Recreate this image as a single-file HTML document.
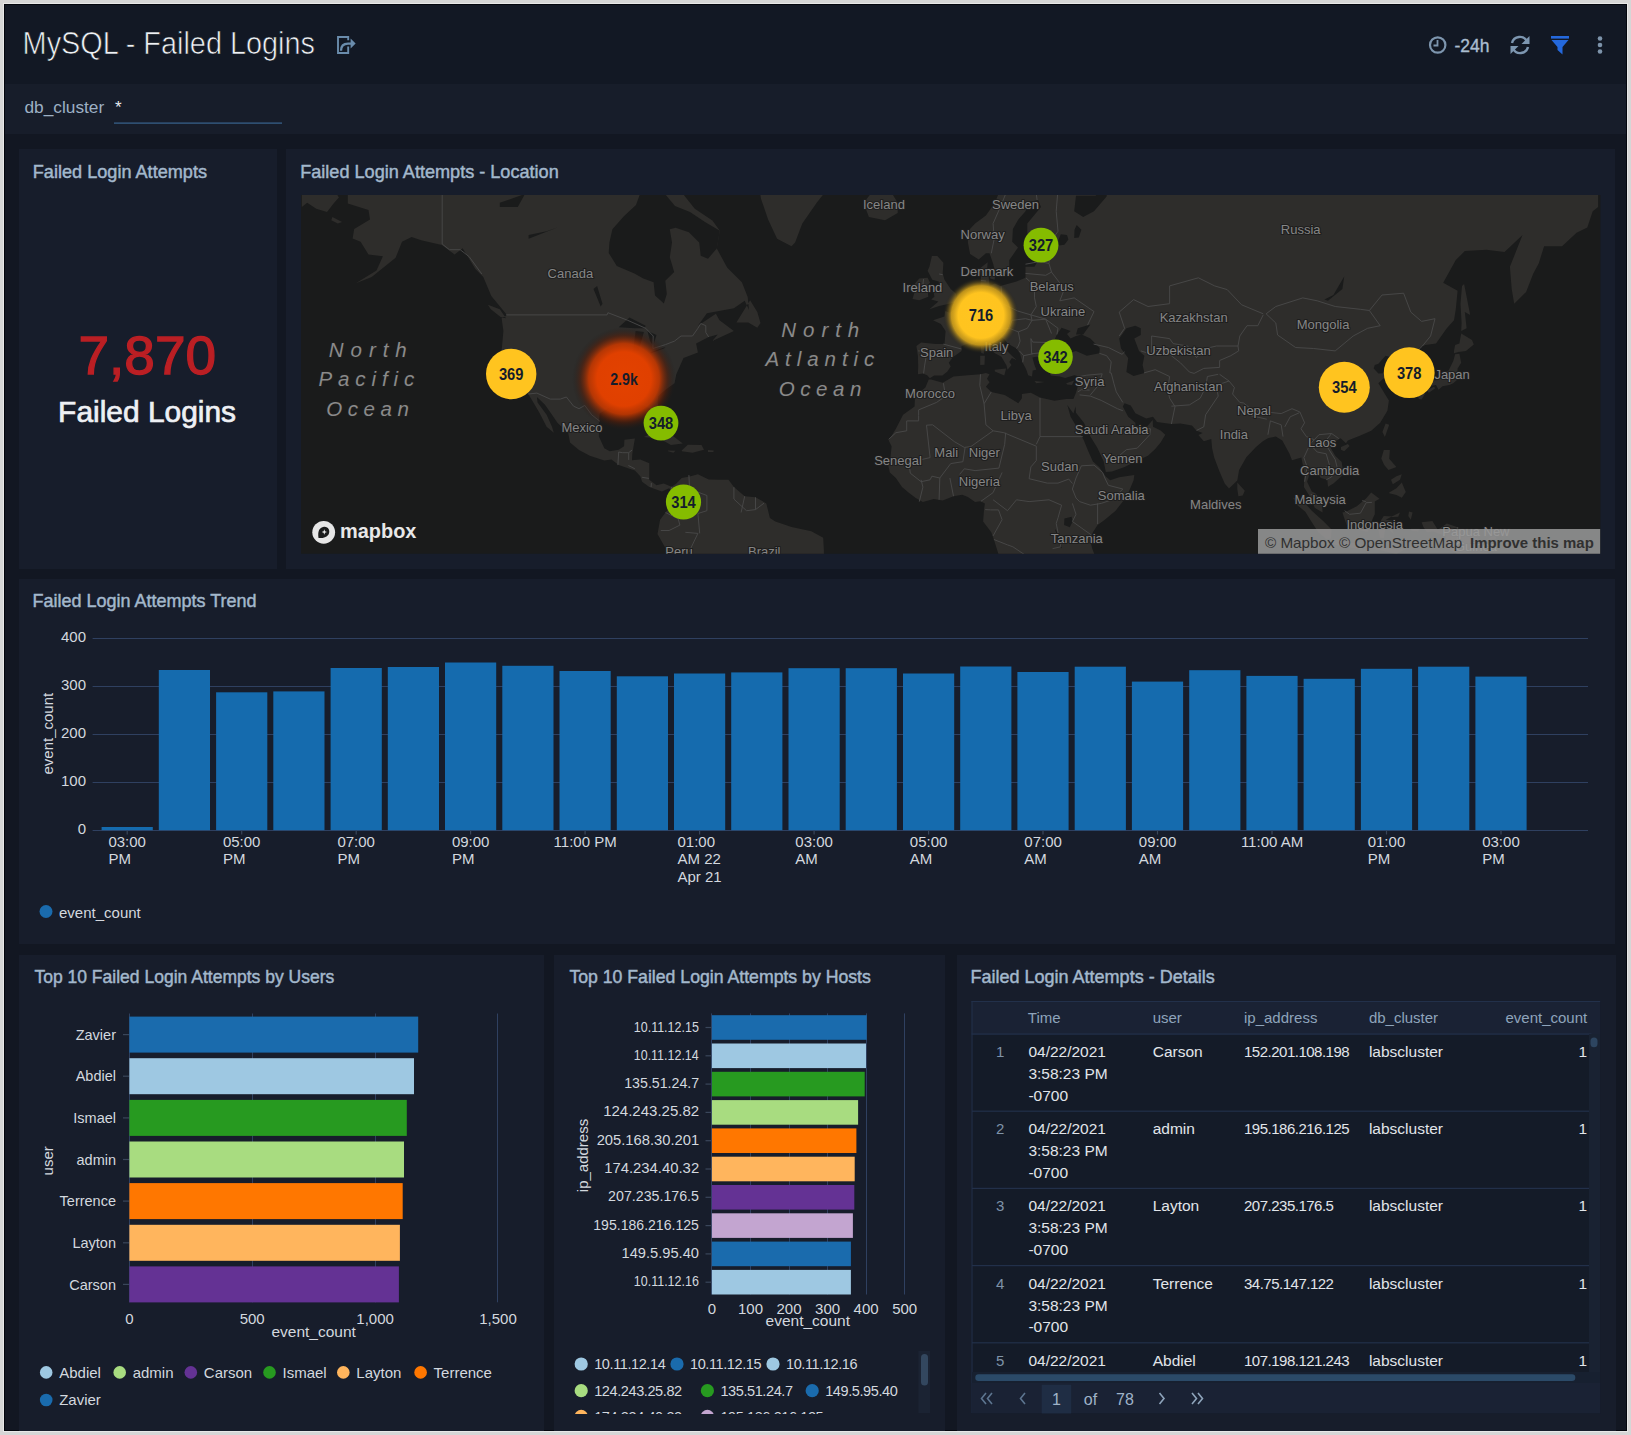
<!DOCTYPE html>
<html><head><meta charset="utf-8"><style>
html,body{margin:0;padding:0;background:#d6d6d6;width:1631px;height:1435px;overflow:hidden}
svg text{font-family:"Liberation Sans", sans-serif}
</style></head><body>
<svg width="1631" height="1435" viewBox="0 0 1631 1435" style="position:absolute;left:0;top:0">
<rect x="0" y="0" width="1631" height="1435" fill="#d6d6d6"/>
<rect x="3" y="3" width="1625" height="1429" fill="#e8e8e8"/>
<rect x="4" y="4" width="1623" height="1427" fill="#03060d"/>
<rect x="5" y="5" width="1621" height="1425" fill="#121722"/>
<rect x="5.0" y="5.0" width="1621.0" height="79.0" fill="#121824" />
<rect x="5.0" y="84.0" width="1621.0" height="50.0" fill="#171d2a" />
<text x="22.62" y="53.6" font-size="31.5" fill="#eef1f5" font-weight="400" textLength="292.36" lengthAdjust="spacingAndGlyphs" stroke="#121824" stroke-width="0.7">MySQL - Failed Logins</text>
<g fill="none" stroke="#6a8cac" stroke-width="1.9"><path d="M348.2 40.2 V37 H338 V53 H348.2 V46.6"/><path d="M341 50.8 Q341 43.6 348 43.6 H351.5" stroke-width="2.3"/></g><path d="M350.6 38.6 L355.6 43.5 L350.6 48.6 Z" fill="#6a8cac"/>
<circle cx="1437.7" cy="45" r="7.7" fill="none" stroke="#7d95ae" stroke-width="2.2"/><path d="M1437.5 40 V45.5 H1433.5" fill="none" stroke="#7d95ae" stroke-width="1.8"/>
<text x="1454.5" y="51.5" font-size="17.5" fill="#abbdd0" font-weight="400" text-anchor="start" stroke="#abbdd0" stroke-width="0.35">-24h</text>
<g fill="none" stroke="#7d96b0" stroke-width="2.4"><path d="M1512 43 A8 8 0 0 1 1527 41.5"/><path d="M1528 47 A8 8 0 0 1 1513 48.5"/></g><path d="M1529.5 36 V44 H1521.5 Z" fill="#7d96b0"/><path d="M1510.5 54 V46 H1518.5 Z" fill="#7d96b0"/>
<rect x="1551" y="36" width="18" height="2.6" fill="#2468dc"/><path d="M1551.5 40 H1568.5 L1562.5 47 V54.5 L1557.5 50 V47 Z" fill="#2468dc"/>
<circle cx="1600" cy="38.5" r="2.3" fill="#7d93aa"/>
<circle cx="1600" cy="45" r="2.3" fill="#7d93aa"/>
<circle cx="1600" cy="51.5" r="2.3" fill="#7d93aa"/>
<text x="24.5" y="113.0" font-size="17.3" fill="#9db0c4" font-weight="400" text-anchor="start" >db_cluster</text>
<text x="115.0" y="113.0" font-size="17" fill="#e6eaef" font-weight="400" text-anchor="start" >*</text>
<rect x="114.0" y="122.5" width="168.0" height="1.2" fill="#3a6590" />
<rect x="19.0" y="149.0" width="258.0" height="420.0" fill="#171d2b" />
<rect x="286.0" y="149.0" width="1329.0" height="420.0" fill="#171d2b" />
<rect x="19.0" y="579.0" width="1596.0" height="365.0" fill="#171d2b" />
<rect x="19.0" y="955.0" width="525.0" height="476.0" fill="#171d2b" />
<rect x="554.0" y="955.0" width="391.0" height="476.0" fill="#171d2b" />
<rect x="957.0" y="955.0" width="659.0" height="476.0" fill="#171d2b" />
<text x="32.81" y="177.5" font-size="17.7" fill="#a3b8cc" font-weight="400" textLength="174.22" lengthAdjust="spacingAndGlyphs" stroke="#a3b8cc" stroke-width="0.45">Failed Login Attempts</text>
<text x="300.21" y="177.5" font-size="17.7" fill="#a3b8cc" font-weight="400" textLength="258.50" lengthAdjust="spacingAndGlyphs" stroke="#a3b8cc" stroke-width="0.45">Failed Login Attempts - Location</text>
<text x="32.52" y="607.0" font-size="17.7" fill="#a3b8cc" font-weight="400" textLength="224.05" lengthAdjust="spacingAndGlyphs" stroke="#a3b8cc" stroke-width="0.45">Failed Login Attempts Trend</text>
<text x="34.41" y="983.0" font-size="17.7" fill="#a3b8cc" font-weight="400" textLength="299.92" lengthAdjust="spacingAndGlyphs" stroke="#a3b8cc" stroke-width="0.45">Top 10 Failed Login Attempts by Users</text>
<text x="569.40" y="983.0" font-size="17.7" fill="#a3b8cc" font-weight="400" textLength="301.43" lengthAdjust="spacingAndGlyphs" stroke="#a3b8cc" stroke-width="0.45">Top 10 Failed Login Attempts by Hosts</text>
<text x="970.41" y="983.0" font-size="17.7" fill="#a3b8cc" font-weight="400" textLength="244.32" lengthAdjust="spacingAndGlyphs" stroke="#a3b8cc" stroke-width="0.45">Failed Login Attempts - Details</text>
<text x="78.51" y="374.4" font-size="53.5" fill="#bb1f24" font-weight="400" textLength="137.55" lengthAdjust="spacingAndGlyphs" stroke="#bb1f24" stroke-width="1.3">7,870</text>
<text x="58.13" y="422.0" font-size="29.5" fill="#eef0f4" font-weight="400" textLength="177.94" lengthAdjust="spacingAndGlyphs" stroke="#eef0f4" stroke-width="0.7">Failed Logins</text>
<rect x="92.6" y="830.0" width="1495.4" height="1.0" fill="#2f4060" />
<text x="86.0" y="834.0" font-size="15" fill="#d3d8df" font-weight="400" text-anchor="end" >0</text>
<rect x="92.6" y="782.0" width="1495.4" height="1.0" fill="#2f4060" />
<text x="86.0" y="786.0" font-size="15" fill="#d3d8df" font-weight="400" text-anchor="end" >100</text>
<rect x="92.6" y="734.0" width="1495.4" height="1.0" fill="#2f4060" />
<text x="86.0" y="738.0" font-size="15" fill="#d3d8df" font-weight="400" text-anchor="end" >200</text>
<rect x="92.6" y="686.0" width="1495.4" height="1.0" fill="#2f4060" />
<text x="86.0" y="690.0" font-size="15" fill="#d3d8df" font-weight="400" text-anchor="end" >300</text>
<rect x="92.6" y="638.0" width="1495.4" height="1.0" fill="#2f4060" />
<text x="86.0" y="642.0" font-size="15" fill="#d3d8df" font-weight="400" text-anchor="end" >400</text>
<rect x="101.6" y="827.0" width="51.2" height="3.2" fill="#156bae" />
<rect x="158.8" y="670.0" width="51.2" height="160.2" fill="#156bae" />
<rect x="216.1" y="692.3" width="51.2" height="137.9" fill="#156bae" />
<rect x="273.3" y="691.4" width="51.2" height="138.8" fill="#156bae" />
<rect x="330.6" y="668.0" width="51.2" height="162.2" fill="#156bae" />
<rect x="387.8" y="667.0" width="51.2" height="163.2" fill="#156bae" />
<rect x="445.0" y="662.5" width="51.2" height="167.7" fill="#156bae" />
<rect x="502.3" y="665.8" width="51.2" height="164.4" fill="#156bae" />
<rect x="559.5" y="671.0" width="51.2" height="159.2" fill="#156bae" />
<rect x="616.8" y="676.3" width="51.2" height="153.9" fill="#156bae" />
<rect x="674.0" y="673.5" width="51.2" height="156.7" fill="#156bae" />
<rect x="731.2" y="672.4" width="51.2" height="157.8" fill="#156bae" />
<rect x="788.5" y="668.2" width="51.2" height="162.0" fill="#156bae" />
<rect x="845.7" y="668.2" width="51.2" height="162.0" fill="#156bae" />
<rect x="903.0" y="673.5" width="51.2" height="156.7" fill="#156bae" />
<rect x="960.2" y="666.5" width="51.2" height="163.7" fill="#156bae" />
<rect x="1017.4" y="672.0" width="51.2" height="158.2" fill="#156bae" />
<rect x="1074.7" y="666.7" width="51.2" height="163.5" fill="#156bae" />
<rect x="1131.9" y="681.6" width="51.2" height="148.6" fill="#156bae" />
<rect x="1189.2" y="670.2" width="51.2" height="160.0" fill="#156bae" />
<rect x="1246.4" y="675.9" width="51.2" height="154.3" fill="#156bae" />
<rect x="1303.6" y="678.8" width="51.2" height="151.4" fill="#156bae" />
<rect x="1360.9" y="668.8" width="51.2" height="161.4" fill="#156bae" />
<rect x="1418.1" y="666.7" width="51.2" height="163.5" fill="#156bae" />
<rect x="1475.4" y="676.6" width="51.2" height="153.6" fill="#156bae" />
<rect x="126.6" y="830.5" width="1.2" height="4.0" fill="#3a465a" />
<text x="108.4" y="846.6" font-size="15" fill="#d3d8df" font-weight="400" text-anchor="start" >03:00</text>
<text x="108.4" y="864.2" font-size="15" fill="#d3d8df" font-weight="400" text-anchor="start" >PM</text>
<rect x="241.1" y="830.5" width="1.2" height="4.0" fill="#3a465a" />
<text x="222.9" y="846.6" font-size="15" fill="#d3d8df" font-weight="400" text-anchor="start" >05:00</text>
<text x="222.9" y="864.2" font-size="15" fill="#d3d8df" font-weight="400" text-anchor="start" >PM</text>
<rect x="355.6" y="830.5" width="1.2" height="4.0" fill="#3a465a" />
<text x="337.4" y="846.6" font-size="15" fill="#d3d8df" font-weight="400" text-anchor="start" >07:00</text>
<text x="337.4" y="864.2" font-size="15" fill="#d3d8df" font-weight="400" text-anchor="start" >PM</text>
<rect x="470.0" y="830.5" width="1.2" height="4.0" fill="#3a465a" />
<text x="451.9" y="846.6" font-size="15" fill="#d3d8df" font-weight="400" text-anchor="start" >09:00</text>
<text x="451.9" y="864.2" font-size="15" fill="#d3d8df" font-weight="400" text-anchor="start" >PM</text>
<rect x="584.5" y="830.5" width="1.2" height="4.0" fill="#3a465a" />
<text x="553.6" y="846.6" font-size="15" fill="#d3d8df" font-weight="400" text-anchor="start" >11:00 PM</text>
<rect x="699.0" y="830.5" width="1.2" height="4.0" fill="#3a465a" />
<text x="677.5" y="846.6" font-size="15" fill="#d3d8df" font-weight="400" text-anchor="start" >01:00</text>
<text x="677.5" y="864.2" font-size="15" fill="#d3d8df" font-weight="400" text-anchor="start" >AM 22</text>
<text x="677.5" y="881.8" font-size="15" fill="#d3d8df" font-weight="400" text-anchor="start" >Apr 21</text>
<rect x="813.5" y="830.5" width="1.2" height="4.0" fill="#3a465a" />
<text x="795.3" y="846.6" font-size="15" fill="#d3d8df" font-weight="400" text-anchor="start" >03:00</text>
<text x="795.3" y="864.2" font-size="15" fill="#d3d8df" font-weight="400" text-anchor="start" >AM</text>
<rect x="928.0" y="830.5" width="1.2" height="4.0" fill="#3a465a" />
<text x="909.8" y="846.6" font-size="15" fill="#d3d8df" font-weight="400" text-anchor="start" >05:00</text>
<text x="909.8" y="864.2" font-size="15" fill="#d3d8df" font-weight="400" text-anchor="start" >AM</text>
<rect x="1042.4" y="830.5" width="1.2" height="4.0" fill="#3a465a" />
<text x="1024.3" y="846.6" font-size="15" fill="#d3d8df" font-weight="400" text-anchor="start" >07:00</text>
<text x="1024.3" y="864.2" font-size="15" fill="#d3d8df" font-weight="400" text-anchor="start" >AM</text>
<rect x="1156.9" y="830.5" width="1.2" height="4.0" fill="#3a465a" />
<text x="1138.8" y="846.6" font-size="15" fill="#d3d8df" font-weight="400" text-anchor="start" >09:00</text>
<text x="1138.8" y="864.2" font-size="15" fill="#d3d8df" font-weight="400" text-anchor="start" >AM</text>
<rect x="1271.4" y="830.5" width="1.2" height="4.0" fill="#3a465a" />
<text x="1240.9" y="846.6" font-size="15" fill="#d3d8df" font-weight="400" text-anchor="start" >11:00 AM</text>
<rect x="1385.9" y="830.5" width="1.2" height="4.0" fill="#3a465a" />
<text x="1367.7" y="846.6" font-size="15" fill="#d3d8df" font-weight="400" text-anchor="start" >01:00</text>
<text x="1367.7" y="864.2" font-size="15" fill="#d3d8df" font-weight="400" text-anchor="start" >PM</text>
<rect x="1500.4" y="830.5" width="1.2" height="4.0" fill="#3a465a" />
<text x="1482.2" y="846.6" font-size="15" fill="#d3d8df" font-weight="400" text-anchor="start" >03:00</text>
<text x="1482.2" y="864.2" font-size="15" fill="#d3d8df" font-weight="400" text-anchor="start" >PM</text>
<text x="0.0" y="0.0" font-size="15" fill="#d3d8df" font-weight="400" text-anchor="middle" transform="translate(52.5 733.7) rotate(-90)">event_count</text>
<circle cx="46" cy="911.5" r="6.5" fill="#1a6bad"/>
<text x="59.0" y="918.0" font-size="15" fill="#d3d8df" font-weight="400" text-anchor="start" >event_count</text>
<rect x="129.0" y="1013.5" width="1.0" height="288.8" fill="#2f4060" />
<rect x="252.0" y="1013.5" width="1.0" height="288.8" fill="#2f4060" />
<rect x="375.0" y="1013.5" width="1.0" height="288.8" fill="#2f4060" />
<rect x="497.0" y="1013.5" width="1.0" height="288.8" fill="#2f4060" />
<rect x="129.4" y="1016.6" width="288.8" height="36.0" fill="#1a6bad" />
<rect x="123.0" y="1034.0" width="6.0" height="1.2" fill="#3a465a" />
<text x="116.0" y="1039.8" font-size="14.5" fill="#d3d8df" font-weight="400" text-anchor="end" >Zavier</text>
<rect x="129.4" y="1058.2" width="284.6" height="36.0" fill="#9ec8e2" />
<rect x="123.0" y="1075.6" width="6.0" height="1.2" fill="#3a465a" />
<text x="116.0" y="1081.4" font-size="14.5" fill="#d3d8df" font-weight="400" text-anchor="end" >Abdiel</text>
<rect x="129.4" y="1099.9" width="277.4" height="36.0" fill="#279a20" />
<rect x="123.0" y="1117.3" width="6.0" height="1.2" fill="#3a465a" />
<text x="116.0" y="1123.1" font-size="14.5" fill="#d3d8df" font-weight="400" text-anchor="end" >Ismael</text>
<rect x="129.4" y="1141.5" width="274.6" height="36.0" fill="#a8dc80" />
<rect x="123.0" y="1158.9" width="6.0" height="1.2" fill="#3a465a" />
<text x="116.0" y="1164.7" font-size="14.5" fill="#d3d8df" font-weight="400" text-anchor="end" >admin</text>
<rect x="129.4" y="1183.1" width="273.3" height="36.0" fill="#ff7700" />
<rect x="123.0" y="1200.5" width="6.0" height="1.2" fill="#3a465a" />
<text x="116.0" y="1206.3" font-size="14.5" fill="#d3d8df" font-weight="400" text-anchor="end" >Terrence</text>
<rect x="129.4" y="1224.8" width="270.5" height="36.0" fill="#ffb55d" />
<rect x="123.0" y="1242.2" width="6.0" height="1.2" fill="#3a465a" />
<text x="116.0" y="1248.0" font-size="14.5" fill="#d3d8df" font-weight="400" text-anchor="end" >Layton</text>
<rect x="129.4" y="1266.4" width="269.5" height="36.0" fill="#643294" />
<rect x="123.0" y="1283.8" width="6.0" height="1.2" fill="#3a465a" />
<text x="116.0" y="1289.6" font-size="14.5" fill="#d3d8df" font-weight="400" text-anchor="end" >Carson</text>
<text x="129.4" y="1323.5" font-size="15" fill="#d3d8df" font-weight="400" text-anchor="middle" >0</text>
<text x="252.2" y="1323.5" font-size="15" fill="#d3d8df" font-weight="400" text-anchor="middle" >500</text>
<text x="375.1" y="1323.5" font-size="15" fill="#d3d8df" font-weight="400" text-anchor="middle" >1,000</text>
<text x="498.0" y="1323.5" font-size="15" fill="#d3d8df" font-weight="400" text-anchor="middle" >1,500</text>
<text x="313.7" y="1336.8" font-size="15.5" fill="#d3d8df" font-weight="400" text-anchor="middle" >event_count</text>
<text x="0.0" y="0.0" font-size="15" fill="#d3d8df" font-weight="400" text-anchor="middle" transform="translate(52.5 1160.8) rotate(-90)">user</text>
<circle cx="46.2" cy="1372.4" r="6.3" fill="#9ec8e2"/>
<text x="59.2" y="1377.7" font-size="15" fill="#d3d8df" font-weight="400" text-anchor="start" >Abdiel</text>
<circle cx="119.7" cy="1372.4" r="6.3" fill="#a8dc80"/>
<text x="132.7" y="1377.7" font-size="15" fill="#d3d8df" font-weight="400" text-anchor="start" >admin</text>
<circle cx="190.8" cy="1372.4" r="6.3" fill="#643294"/>
<text x="203.8" y="1377.7" font-size="15" fill="#d3d8df" font-weight="400" text-anchor="start" >Carson</text>
<circle cx="269.5" cy="1372.4" r="6.3" fill="#279a20"/>
<text x="282.5" y="1377.7" font-size="15" fill="#d3d8df" font-weight="400" text-anchor="start" >Ismael</text>
<circle cx="343.3" cy="1372.4" r="6.3" fill="#ffb55d"/>
<text x="356.3" y="1377.7" font-size="15" fill="#d3d8df" font-weight="400" text-anchor="start" >Layton</text>
<circle cx="420.6" cy="1372.4" r="6.3" fill="#ff7700"/>
<text x="433.6" y="1377.7" font-size="15" fill="#d3d8df" font-weight="400" text-anchor="start" >Terrence</text>
<circle cx="46.2" cy="1400" r="6.3" fill="#1a6bad"/>
<text x="59.2" y="1405.3" font-size="15" fill="#d3d8df" font-weight="400" text-anchor="start" >Zavier</text>
<rect x="711.0" y="1013.4" width="1.0" height="281.1" fill="#2f4060" />
<rect x="750.0" y="1013.4" width="1.0" height="281.1" fill="#2f4060" />
<rect x="789.0" y="1013.4" width="1.0" height="281.1" fill="#2f4060" />
<rect x="827.0" y="1013.4" width="1.0" height="281.1" fill="#2f4060" />
<rect x="866.0" y="1013.4" width="1.0" height="281.1" fill="#2f4060" />
<rect x="904.0" y="1013.4" width="1.0" height="281.1" fill="#2f4060" />
<rect x="711.9" y="1015.2" width="154.8" height="24.6" fill="#1a6bad" />
<rect x="705.5" y="1026.9" width="6.0" height="1.2" fill="#3a465a" />
<text x="633.76" y="1031.5" font-size="15" fill="#d3d8df" font-weight="400" textLength="65.15" lengthAdjust="spacingAndGlyphs" >10.11.12.15</text>
<rect x="711.9" y="1043.5" width="154.1" height="24.6" fill="#9ec8e2" />
<rect x="705.5" y="1055.2" width="6.0" height="1.2" fill="#3a465a" />
<text x="633.76" y="1059.8" font-size="15" fill="#d3d8df" font-weight="400" textLength="64.99" lengthAdjust="spacingAndGlyphs" >10.11.12.14</text>
<rect x="711.9" y="1071.8" width="152.8" height="24.6" fill="#279a20" />
<rect x="705.5" y="1083.5" width="6.0" height="1.2" fill="#3a465a" />
<text x="624.24" y="1088.1" font-size="15" fill="#d3d8df" font-weight="400" textLength="74.88" lengthAdjust="spacingAndGlyphs" >135.51.24.7</text>
<rect x="711.9" y="1100.1" width="146.2" height="24.6" fill="#a8dc80" />
<rect x="705.5" y="1111.8" width="6.0" height="1.2" fill="#3a465a" />
<text x="603.17" y="1116.4" font-size="15" fill="#d3d8df" font-weight="400" textLength="95.98" lengthAdjust="spacingAndGlyphs" >124.243.25.82</text>
<rect x="711.9" y="1128.4" width="144.5" height="24.6" fill="#ff7700" />
<rect x="705.5" y="1140.1" width="6.0" height="1.2" fill="#3a465a" />
<text x="596.66" y="1144.7" font-size="15" fill="#d3d8df" font-weight="400" textLength="102.46" lengthAdjust="spacingAndGlyphs" >205.168.30.201</text>
<rect x="711.9" y="1156.7" width="142.8" height="24.6" fill="#ffb55d" />
<rect x="705.5" y="1168.4" width="6.0" height="1.2" fill="#3a465a" />
<text x="604.19" y="1173.0" font-size="15" fill="#d3d8df" font-weight="400" textLength="94.96" lengthAdjust="spacingAndGlyphs" >174.234.40.32</text>
<rect x="711.9" y="1185.0" width="142.4" height="24.6" fill="#643294" />
<rect x="705.5" y="1196.7" width="6.0" height="1.2" fill="#3a465a" />
<text x="608.09" y="1201.3" font-size="15" fill="#d3d8df" font-weight="400" textLength="90.88" lengthAdjust="spacingAndGlyphs" >207.235.176.5</text>
<rect x="711.9" y="1213.3" width="141.0" height="24.6" fill="#c3a5d0" />
<rect x="705.5" y="1225.0" width="6.0" height="1.2" fill="#3a465a" />
<text x="593.24" y="1229.6" font-size="15" fill="#d3d8df" font-weight="400" textLength="105.72" lengthAdjust="spacingAndGlyphs" >195.186.216.125</text>
<rect x="711.9" y="1241.6" width="139.0" height="24.6" fill="#1a6bad" />
<rect x="705.5" y="1253.3" width="6.0" height="1.2" fill="#3a465a" />
<text x="621.50" y="1257.9" font-size="15" fill="#d3d8df" font-weight="400" textLength="77.46" lengthAdjust="spacingAndGlyphs" >149.5.95.40</text>
<rect x="711.9" y="1269.9" width="139.0" height="24.6" fill="#9ec8e2" />
<rect x="705.5" y="1281.6" width="6.0" height="1.2" fill="#3a465a" />
<text x="633.76" y="1286.2" font-size="15" fill="#d3d8df" font-weight="400" textLength="65.19" lengthAdjust="spacingAndGlyphs" >10.11.12.16</text>
<text x="711.9" y="1314.0" font-size="15" fill="#d3d8df" font-weight="400" text-anchor="middle" >0</text>
<text x="750.5" y="1314.0" font-size="15" fill="#d3d8df" font-weight="400" text-anchor="middle" >100</text>
<text x="789.0" y="1314.0" font-size="15" fill="#d3d8df" font-weight="400" text-anchor="middle" >200</text>
<text x="827.6" y="1314.0" font-size="15" fill="#d3d8df" font-weight="400" text-anchor="middle" >300</text>
<text x="866.1" y="1314.0" font-size="15" fill="#d3d8df" font-weight="400" text-anchor="middle" >400</text>
<text x="904.7" y="1314.0" font-size="15" fill="#d3d8df" font-weight="400" text-anchor="middle" >500</text>
<text x="807.8" y="1325.5" font-size="15.5" fill="#d3d8df" font-weight="400" text-anchor="middle" >event_count</text>
<text x="0.0" y="0.0" font-size="15" fill="#d3d8df" font-weight="400" text-anchor="middle" transform="translate(587.5 1155.5) rotate(-90)">ip_address</text>
<svg x="560" y="1350" width="360" height="64" overflow="hidden">
<circle cx="21.200000000000045" cy="14" r="6.6" fill="#9ec8e2"/>
<text x="34.2" y="19.2" font-size="14.5" fill="#d3d8df" font-weight="400" text-anchor="start" letter-spacing="-0.4">10.11.12.14</text>
<circle cx="117" cy="14" r="6.6" fill="#1a6bad"/>
<text x="130.0" y="19.2" font-size="14.5" fill="#d3d8df" font-weight="400" text-anchor="start" letter-spacing="-0.4">10.11.12.15</text>
<circle cx="213" cy="14" r="6.6" fill="#9ec8e2"/>
<text x="226.0" y="19.2" font-size="14.5" fill="#d3d8df" font-weight="400" text-anchor="start" letter-spacing="-0.4">10.11.12.16</text>
<circle cx="21.200000000000045" cy="40.700000000000045" r="6.6" fill="#a8dc80"/>
<text x="34.2" y="45.9" font-size="14.5" fill="#d3d8df" font-weight="400" text-anchor="start" letter-spacing="-0.4">124.243.25.82</text>
<circle cx="147.39999999999998" cy="40.700000000000045" r="6.6" fill="#279a20"/>
<text x="160.4" y="45.9" font-size="14.5" fill="#d3d8df" font-weight="400" text-anchor="start" letter-spacing="-0.4">135.51.24.7</text>
<circle cx="252.20000000000005" cy="40.700000000000045" r="6.6" fill="#1a6bad"/>
<text x="265.2" y="45.9" font-size="14.5" fill="#d3d8df" font-weight="400" text-anchor="start" letter-spacing="-0.4">149.5.95.40</text>
<circle cx="21.200000000000045" cy="66.29999999999995" r="6.6" fill="#ffb55d"/>
<text x="34.2" y="71.5" font-size="14.5" fill="#d3d8df" font-weight="400" text-anchor="start" letter-spacing="-0.4">174.234.40.32</text>
<circle cx="147.39999999999998" cy="66.29999999999995" r="6.6" fill="#c3a5d0"/>
<text x="160.4" y="71.5" font-size="14.5" fill="#d3d8df" font-weight="400" text-anchor="start" letter-spacing="-0.4">195.186.216.125</text>
</svg>
<rect x="918.4" y="1351.0" width="11.6" height="62.0" fill="#1b2333" />
<rect x="921" y="1354" width="7" height="31.5" rx="3.5" fill="#33475f"/>
<rect x="971.5" y="1001.0" width="628.7" height="412.4" fill="#141b28" />
<rect x="971.5" y="1001.0" width="628.7" height="33.0" fill="#1a2234" />
<rect x="971.5" y="1001.0" width="628.7" height="1.0" fill="#22304a" />
<rect x="971.5" y="1001.0" width="1.0" height="412.0" fill="#22304a" />
<rect x="971.5" y="1033.5" width="620.0" height="1.2" fill="#22304a" />
<rect x="1589.0" y="1034.0" width="11.0" height="349.0" fill="#192232" />
<rect x="1590.5" y="1037.6" width="7" height="9.6" rx="3.5" fill="#2d4560"/>
<text x="1027.8" y="1022.8" font-size="15" fill="#8ea4bb" font-weight="400" text-anchor="start" >Time</text>
<text x="1152.7" y="1022.8" font-size="15" fill="#8ea4bb" font-weight="400" text-anchor="start" >user</text>
<text x="1244.0" y="1022.8" font-size="15" fill="#8ea4bb" font-weight="400" text-anchor="start" >ip_address</text>
<text x="1368.9" y="1022.8" font-size="15" fill="#8ea4bb" font-weight="400" text-anchor="start" >db_cluster</text>
<text x="1587.2" y="1022.8" font-size="15" fill="#8ea4bb" font-weight="400" text-anchor="end" >event_count</text>
<svg x="972" y="1034" width="617" height="338" overflow="hidden">
<text x="28.2" y="23.0" font-size="15" fill="#7f93a8" font-weight="400" text-anchor="middle" >1</text>
<text x="56.4" y="23.0" font-size="15.5" fill="#e1e5ea" font-weight="400" text-anchor="start" >04/22/2021</text>
<text x="56.4" y="44.9" font-size="15.5" fill="#e1e5ea" font-weight="400" text-anchor="start" >3:58:23 PM</text>
<text x="56.4" y="66.8" font-size="15.5" fill="#e1e5ea" font-weight="400" text-anchor="start" >-0700</text>
<text x="180.7" y="23.0" font-size="15.5" fill="#e1e5ea" font-weight="400" text-anchor="start" >Carson</text>
<text x="272.0" y="23.0" font-size="15" fill="#e1e5ea" font-weight="400" text-anchor="start" letter-spacing="-0.5">152.201.108.198</text>
<text x="396.9" y="23.0" font-size="15.5" fill="#e1e5ea" font-weight="400" text-anchor="start" >labscluster</text>
<text x="615.2" y="23.0" font-size="15.5" fill="#e1e5ea" font-weight="400" text-anchor="end" >1</text>
<rect x="0.0" y="76.6" width="617.0" height="1.2" fill="#22304a" />
<text x="28.2" y="100.2" font-size="15" fill="#7f93a8" font-weight="400" text-anchor="middle" >2</text>
<text x="56.4" y="100.2" font-size="15.5" fill="#e1e5ea" font-weight="400" text-anchor="start" >04/22/2021</text>
<text x="56.4" y="122.1" font-size="15.5" fill="#e1e5ea" font-weight="400" text-anchor="start" >3:58:23 PM</text>
<text x="56.4" y="144.0" font-size="15.5" fill="#e1e5ea" font-weight="400" text-anchor="start" >-0700</text>
<text x="180.7" y="100.2" font-size="15.5" fill="#e1e5ea" font-weight="400" text-anchor="start" >admin</text>
<text x="272.0" y="100.2" font-size="15" fill="#e1e5ea" font-weight="400" text-anchor="start" letter-spacing="-0.5">195.186.216.125</text>
<text x="396.9" y="100.2" font-size="15.5" fill="#e1e5ea" font-weight="400" text-anchor="start" >labscluster</text>
<text x="615.2" y="100.2" font-size="15.5" fill="#e1e5ea" font-weight="400" text-anchor="end" >1</text>
<rect x="0.0" y="153.8" width="617.0" height="1.2" fill="#22304a" />
<text x="28.2" y="177.4" font-size="15" fill="#7f93a8" font-weight="400" text-anchor="middle" >3</text>
<text x="56.4" y="177.4" font-size="15.5" fill="#e1e5ea" font-weight="400" text-anchor="start" >04/22/2021</text>
<text x="56.4" y="199.3" font-size="15.5" fill="#e1e5ea" font-weight="400" text-anchor="start" >3:58:23 PM</text>
<text x="56.4" y="221.2" font-size="15.5" fill="#e1e5ea" font-weight="400" text-anchor="start" >-0700</text>
<text x="180.7" y="177.4" font-size="15.5" fill="#e1e5ea" font-weight="400" text-anchor="start" >Layton</text>
<text x="272.0" y="177.4" font-size="15" fill="#e1e5ea" font-weight="400" text-anchor="start" letter-spacing="-0.5">207.235.176.5</text>
<text x="396.9" y="177.4" font-size="15.5" fill="#e1e5ea" font-weight="400" text-anchor="start" >labscluster</text>
<text x="615.2" y="177.4" font-size="15.5" fill="#e1e5ea" font-weight="400" text-anchor="end" >1</text>
<rect x="0.0" y="231.0" width="617.0" height="1.2" fill="#22304a" />
<text x="28.2" y="254.6" font-size="15" fill="#7f93a8" font-weight="400" text-anchor="middle" >4</text>
<text x="56.4" y="254.6" font-size="15.5" fill="#e1e5ea" font-weight="400" text-anchor="start" >04/22/2021</text>
<text x="56.4" y="276.5" font-size="15.5" fill="#e1e5ea" font-weight="400" text-anchor="start" >3:58:23 PM</text>
<text x="56.4" y="298.4" font-size="15.5" fill="#e1e5ea" font-weight="400" text-anchor="start" >-0700</text>
<text x="180.7" y="254.6" font-size="15.5" fill="#e1e5ea" font-weight="400" text-anchor="start" >Terrence</text>
<text x="272.0" y="254.6" font-size="15" fill="#e1e5ea" font-weight="400" text-anchor="start" letter-spacing="-0.5">34.75.147.122</text>
<text x="396.9" y="254.6" font-size="15.5" fill="#e1e5ea" font-weight="400" text-anchor="start" >labscluster</text>
<text x="615.2" y="254.6" font-size="15.5" fill="#e1e5ea" font-weight="400" text-anchor="end" >1</text>
<rect x="0.0" y="308.2" width="617.0" height="1.2" fill="#22304a" />
<text x="28.2" y="331.8" font-size="15" fill="#7f93a8" font-weight="400" text-anchor="middle" >5</text>
<text x="56.4" y="331.8" font-size="15.5" fill="#e1e5ea" font-weight="400" text-anchor="start" >04/22/2021</text>
<text x="56.4" y="353.7" font-size="15.5" fill="#e1e5ea" font-weight="400" text-anchor="start" >3:58:23 PM</text>
<text x="56.4" y="375.6" font-size="15.5" fill="#e1e5ea" font-weight="400" text-anchor="start" >-0700</text>
<text x="180.7" y="331.8" font-size="15.5" fill="#e1e5ea" font-weight="400" text-anchor="start" >Abdiel</text>
<text x="272.0" y="331.8" font-size="15" fill="#e1e5ea" font-weight="400" text-anchor="start" letter-spacing="-0.5">107.198.121.243</text>
<text x="396.9" y="331.8" font-size="15.5" fill="#e1e5ea" font-weight="400" text-anchor="start" >labscluster</text>
<text x="615.2" y="331.8" font-size="15.5" fill="#e1e5ea" font-weight="400" text-anchor="end" >1</text>
</svg>
<rect x="972.0" y="1372.0" width="628.0" height="11.0" fill="#172030" />
<rect x="975.3" y="1374.3" width="600" height="6.7" rx="3.3" fill="#2b4a68"/>
<rect x="971.5" y="1383.0" width="628.7" height="30.4" fill="#1a2234" />
<rect x="1041.7" y="1384.8" width="29.5" height="28.6" fill="#1f2d44" />
<text x="1056.5" y="1405.0" font-size="16" fill="#9fb3c8" font-weight="400" text-anchor="middle" >1</text>
<text x="1083.8" y="1405.0" font-size="16" fill="#9fb3c8" font-weight="400" text-anchor="start" >of</text>
<text x="1116.0" y="1405.0" font-size="16" fill="#9fb3c8" font-weight="400" text-anchor="start" >78</text>
<g fill="none" stroke="#5d7590" stroke-width="1.6"><path d="M986 1393 L981.5 1398.5 L986 1404 M992 1393 L987.5 1398.5 L992 1404"/><path d="M1025 1393 L1020.5 1398.5 L1025 1404"/></g><g fill="none" stroke="#8ea4bb" stroke-width="1.6"><path d="M1159.5 1393 L1164 1398.5 L1159.5 1404"/><path d="M1192 1393 L1196.5 1398.5 L1192 1404 M1198 1393 L1202.5 1398.5 L1198 1404"/></g>
<svg x="301" y="195" width="1299.4" height="358.7" viewBox="301 195 1299.4 358.7" overflow="hidden">
<rect x="301" y="195" width="1300" height="360" fill="#1a1b1b"/>
<path fill="#2e2d2b" d="M345.0 137.7L347.8 190.0L347.8 203.6L368.5 210.0L370.0 219.5L354.2 229.0L352.6 238.6L360.6 241.8L368.5 254.6L382.9 256.2L376.5 270.5L355.8 283.3L371.7 276.9L395.6 257.8L402.0 241.8L411.6 237.0L421.2 240.2L441.9 245.0L454.6 254.6L462.6 248.2L475.4 268.9L483.3 276.9L491.3 296.0L507.2 315.2L501.6 318.2L503.4 330.9L501.6 350.9L504.2 362.8L509.2 372.0L515.7 385.4L527.9 393.6L532.2 400.4L539.4 412.8L546.6 426.8L553.8 432.7L552.0 426.8L546.6 414.8L537.6 402.4L536.9 397.0L544.8 404.5L552.0 414.8L557.4 422.8L568.2 432.7L570.0 442.4L579.0 450.1L589.8 455.7L604.3 460.6L611.5 459.5L618.7 465.1L629.5 468.8L634.9 470.6L640.3 476.2L642.1 481.7L649.3 487.1L661.9 491.5L669.1 488.2L671.6 490.8L670.9 494.4L671.6 505.2L665.5 512.5L660.1 519.7L657.5 534.1L663.7 544.9L669.1 554.1L672.7 561.4L823.9 561.4L823.9 550.4L823.2 537.7L811.3 531.2L791.5 526.9L775.3 521.5L769.9 517.9L766.3 503.4L755.5 497.3L744.7 496.2L733.9 487.1L728.5 479.8L719.5 479.8L708.7 479.5L697.9 474.3L690.7 476.2L681.7 478.0L676.3 483.5L671.6 486.8L663.7 483.5L656.5 485.3L649.3 479.8L649.3 463.2L640.3 459.5L632.0 460.2L632.3 453.8L634.9 438.6L624.4 439.7L624.1 446.2L618.7 449.7L609.7 451.2L604.3 448.2L598.9 436.6L598.9 422.8L599.6 413.6L611.5 406.2L625.9 407.8L629.5 403.3L643.9 405.8L651.1 408.7L652.5 416.8L657.5 424.0L661.9 418.8L657.5 402.4L658.3 396.1L665.5 389.7L674.5 383.2L676.3 374.3L683.5 358.1L697.9 352.4L696.1 343.6L708.7 337.0L717.7 334.5L712.3 341.1L733.9 330.9L719.5 320.3L715.9 313.8L697.9 325.7L706.9 313.2L733.9 308.2L744.7 300.8L749.0 310.0L747.7 297.0L741.9 282.3L727.1 267.6L716.8 248.4L719.8 230.8L712.4 220.5L694.8 208.7L683.0 194.0L683.0 150.0ZM301.8 137.7L338.9 197.5L334.2 202.8L327.0 212.1L316.2 208.8L307.2 202.8L301.8 207.1ZM791.5 246.2L777.1 238.8L768.1 219.5L760.9 198.4L755.5 159.8L870.7 159.8L834.7 179.9L816.7 202.8L802.3 223.5L795.1 242.5ZM868.9 217.1L863.5 202.8L870.7 193.9L892.3 193.9L897.7 202.8L897.7 213.0L885.1 220.3ZM643.9 437.0L654.7 431.9L672.7 435.8L682.8 443.6L670.9 445.1L658.3 437.8L647.5 437.4ZM681.7 450.4L687.8 444.7L701.5 445.1L704.0 449.7L692.5 452.7L681.7 451.2ZM668.0 450.4L675.5 450.8L673.4 452.7L668.0 451.2ZM708.0 450.1L713.7 450.4L713.4 452.0L708.0 452.0ZM487.9 304.8L499.8 309.3L506.0 318.2L500.6 317.1L490.8 309.3ZM736.4 322.5L750.1 300.2L757.3 312.1L760.5 323.0L757.3 327.8L748.3 322.5ZM332.4 217.1L342.1 221.9L337.8 223.5L331.3 220.3ZM929.8 378.3L927.2 375.2L922.9 373.4L917.9 374.3L918.2 366.5L917.9 355.7L916.4 346.0L921.1 342.6L935.5 344.1L944.5 344.1L945.6 330.9L940.9 324.1L933.0 320.3L944.5 316.5L945.2 311.0L949.9 312.7L955.7 308.2L958.9 303.1L962.9 300.8L967.2 292.0L975.1 289.0L980.5 285.9L980.9 276.6L979.5 268.8L987.7 262.2L987.0 270.1L988.8 277.8L989.5 285.9L994.9 283.5L1000.3 285.9L1016.5 281.6L1025.5 277.8L1025.5 266.8L1034.5 266.8L1037.4 261.5L1034.5 251.9L1050.8 249.7L1058.0 246.2L1050.8 242.5L1040.0 244.0L1030.9 246.2L1027.3 235.1L1027.3 223.5L1041.0 207.1L1038.1 200.1L1029.1 201.9L1025.5 211.3L1018.3 219.5L1012.9 229.0L1012.2 241.8L1018.0 247.6L1009.3 260.1L1009.3 271.4L1002.1 276.6L996.0 275.9L993.1 263.5L989.5 253.3L985.9 253.3L978.7 259.5L970.1 254.0L967.9 242.5L967.9 231.3L975.1 223.5L985.9 215.4L994.9 202.8L1000.3 189.3L1003.9 175.1L1021.9 159.8L1043.6 149.0L1058.0 159.8L1068.8 167.1L1097.6 184.7L1095.8 195.7L1076.0 195.7L1074.2 211.3L1083.2 217.1L1094.0 211.3L1106.6 196.6L1108.4 179.9L1140.8 175.1L1166.0 170.1L1202.0 137.7L1598.1 137.7L1598.1 207.1L1592.7 211.3L1587.3 227.4L1576.5 232.8L1562.1 246.2L1544.1 246.2L1538.7 263.5L1533.3 273.4L1526.1 292.0L1514.2 303.7L1511.7 289.0L1509.9 266.8L1522.5 235.1L1504.5 251.9L1486.4 249.7L1464.8 251.1L1455.8 260.1L1443.2 282.8L1457.6 290.8L1455.8 309.3L1454.0 320.3L1446.8 328.3L1436.0 343.6L1425.2 345.1L1418.0 348.5L1416.2 355.7L1410.8 360.5L1416.2 376.5L1414.4 382.7L1405.4 385.4L1404.7 376.5L1405.4 371.1L1400.0 369.7L1398.2 361.4L1387.4 360.5L1389.2 356.7L1385.6 355.7L1378.4 363.7L1374.8 365.1L1373.7 368.4L1378.4 373.4L1391.0 372.9L1383.1 378.8L1378.4 383.2L1384.9 394.0L1388.9 400.4L1387.4 410.7L1380.2 422.8L1371.2 430.8L1360.4 435.5L1347.8 440.5L1346.0 443.2L1340.6 438.2L1333.4 442.4L1330.9 448.2L1335.2 455.7L1341.7 462.1L1343.5 474.3L1338.8 478.7L1333.4 483.5L1328.0 486.8L1327.3 479.8L1320.8 478.0L1317.9 473.6L1313.3 468.8L1310.0 472.5L1307.1 481.7L1311.8 491.5L1315.4 493.3L1321.9 501.6L1322.6 512.5L1314.7 507.8L1311.1 498.4L1303.9 487.1L1304.6 474.3L1301.4 457.6L1292.0 460.2L1289.5 453.8L1282.3 440.5L1275.8 436.6L1267.9 438.2L1262.8 441.3L1256.0 447.0L1246.3 457.2L1239.1 469.9L1237.3 480.6L1229.0 488.6L1224.7 483.5L1219.3 471.0L1214.2 457.6L1212.1 448.2L1211.3 438.9L1203.8 441.3L1198.4 435.1L1202.7 433.1L1196.6 430.8L1191.9 425.6L1180.4 423.6L1171.4 424.0L1157.0 422.1L1153.0 416.8L1146.2 418.4L1135.4 413.2L1130.7 405.4L1124.6 403.3L1122.8 406.6L1128.2 416.8L1135.4 422.8L1135.4 428.0L1146.2 427.6L1152.7 420.0L1153.0 426.8L1160.6 430.4L1165.3 434.7L1160.6 442.4L1155.2 448.9L1148.0 455.7L1137.9 460.2L1124.6 466.9L1112.0 471.4L1105.8 472.1L1103.7 461.4L1097.6 448.2L1090.4 436.6L1083.9 422.8L1076.0 412.8L1075.6 406.6L1073.4 413.6L1067.3 404.9L1070.6 416.8L1077.8 428.8L1083.9 440.5L1088.6 452.0L1092.9 461.4L1099.4 467.3L1105.5 476.2L1110.2 480.2L1119.2 477.3L1134.3 475.1L1133.6 480.2L1129.2 490.8L1122.8 501.6L1115.6 510.7L1104.8 519.7L1097.6 525.1L1092.9 532.3L1090.4 541.3L1092.2 548.6L1094.7 555.1L1095.8 572.5L993.1 572.5L998.5 554.1L996.7 548.6L993.9 539.5L991.3 532.3L983.1 521.5L984.1 508.9L984.9 503.4L980.5 501.3L975.1 502.0L967.9 496.9L962.2 494.8L953.5 496.2L942.7 500.6L933.7 499.1L922.9 502.0L915.7 498.0L908.5 492.6L902.0 487.1L895.9 478.0L889.8 472.5L888.0 464.3L890.5 457.6L891.6 446.2L888.7 440.5L895.9 428.8L903.1 414.8L914.6 406.6L915.0 396.1L925.4 387.5L928.7 379.6L931.2 379.6L942.7 382.7L953.5 376.5L967.9 375.2L980.5 374.3L985.9 372.9L989.5 374.3L987.0 378.8L989.5 382.3L985.9 386.7L991.3 391.9L1004.7 394.9L1018.3 403.3L1021.9 398.2L1021.9 394.0L1030.9 392.7L1040.0 397.4L1054.4 400.8L1066.2 399.1L1073.4 399.1L1076.0 392.7L1079.2 381.4L1079.6 376.5L1074.2 375.2L1065.2 377.9L1059.8 376.5L1050.8 375.6L1047.9 367.4L1044.6 360.5L1043.6 357.2L1036.3 356.7L1032.4 357.6L1034.5 365.1L1036.3 369.7L1032.7 370.6L1032.0 376.5L1028.1 375.2L1026.6 370.6L1025.5 367.9L1022.7 362.8L1019.8 353.3L1016.5 348.5L1007.5 343.6L1004.7 339.6L999.3 335.5L999.3 332.4L994.2 334.0L994.9 341.1L999.6 343.6L1007.5 351.4L1011.9 355.7L1016.5 360.0L1011.9 358.1L1009.3 361.9L1011.5 365.1L1007.5 369.7L1006.5 365.6L1001.4 356.7L994.9 353.3L989.5 348.5L986.7 341.6L981.6 339.1L976.9 342.1L971.5 345.5L967.2 344.1L961.5 346.0L961.5 350.9L957.1 354.3L952.8 357.2L948.8 362.8L950.7 366.5L947.4 371.6L942.4 375.6L934.1 375.6ZM994.6 369.7L1006.1 368.4L1004.3 375.6L994.9 371.6ZM980.2 355.7L984.9 355.7L984.5 364.7L980.2 365.1ZM980.9 346.5L984.1 346.0L983.8 353.8L981.3 352.9ZM1034.5 381.0L1044.6 381.9L1036.3 383.2ZM1066.2 383.2L1074.2 380.5L1072.0 384.9L1067.0 384.5ZM929.4 309.3L939.1 306.0L955.0 302.5L956.1 293.8L950.7 289.0L944.5 279.7L942.7 273.4L943.4 262.8L937.3 256.0L931.9 256.0L929.4 266.8L927.6 270.8L932.3 279.7L938.8 281.6L938.8 290.2L933.4 290.2L934.4 296.7L931.2 299.6L938.4 301.4ZM928.3 296.7L927.2 285.3L930.1 282.8L927.6 277.8L919.3 278.5L913.9 284.7L914.6 292.0L912.5 299.1L919.3 300.2ZM989.5 275.3L995.3 273.4L994.6 279.7L990.3 278.5ZM1237.3 482.4L1244.8 490.8L1242.7 495.5L1238.4 496.2L1237.3 489.0ZM1385.6 423.6L1389.2 424.8L1384.9 437.0L1382.4 431.9ZM1341.0 447.0L1347.8 444.0L1349.6 445.9L1344.2 451.2L1341.0 449.7ZM1421.3 387.5L1427.0 381.0L1437.8 380.1L1442.5 372.9L1448.6 370.6L1453.3 360.9L1455.1 354.3L1459.4 353.8L1461.2 362.8L1457.6 368.4L1457.3 375.2L1456.9 380.1L1453.3 383.2L1449.4 384.9L1442.5 386.2L1438.6 389.7L1436.0 384.9L1428.8 386.2L1423.4 387.5ZM1417.3 389.7L1421.6 388.0L1424.9 394.0L1421.6 399.5L1418.8 399.1L1417.3 393.1ZM1427.0 390.1L1434.2 386.7L1435.0 388.4L1428.8 392.7ZM1454.0 353.3L1458.4 351.9L1465.9 350.9L1473.8 344.6L1472.0 340.1L1461.2 333.5L1459.4 343.6L1455.1 345.1L1454.0 350.9ZM1461.2 330.9L1466.6 328.3L1464.8 312.1L1470.2 314.9L1464.1 284.1L1462.0 285.9L1460.5 303.7L1461.6 323.0ZM1383.8 450.1L1389.9 450.1L1389.2 458.7L1396.4 466.9L1388.5 469.9L1384.2 465.1L1381.3 458.4ZM1389.2 492.6L1396.4 488.2L1401.8 482.4L1405.8 491.9L1401.8 497.7L1396.4 495.1L1389.2 493.3ZM1391.0 479.8L1396.4 476.2L1401.8 474.3L1400.0 479.8L1392.8 484.2ZM1342.4 512.5L1346.0 511.7L1356.8 506.3L1365.8 498.7L1371.2 492.6L1379.5 498.7L1374.8 501.6L1374.8 514.3L1373.0 517.9L1369.4 526.9L1367.6 531.9L1362.2 530.5L1351.4 528.7L1346.7 525.1L1344.2 517.9ZM1293.1 497.7L1301.0 499.1L1311.8 510.7L1323.7 521.5L1331.6 529.4L1330.9 538.8L1326.2 539.1L1318.3 532.3L1311.8 522.2L1305.3 511.7L1297.4 505.2ZM1328.7 542.4L1334.5 539.5L1347.8 542.8L1355.0 542.8L1362.2 546.0L1362.2 549.3L1349.6 547.5L1333.4 544.6ZM1379.9 537.7L1383.8 538.1L1385.6 526.9L1393.9 534.1L1389.2 522.5L1393.9 520.7L1385.6 519.7L1392.8 516.1L1400.0 512.5L1398.2 516.8L1383.8 516.1L1381.3 519.7L1378.1 528.7ZM1421.6 522.2L1432.4 521.1L1437.8 529.7L1446.8 523.6L1457.6 527.2L1470.2 531.6L1475.6 537.7L1482.1 540.6L1482.8 546.8L1490.0 555.9L1457.6 554.1L1446.8 548.2L1446.1 536.2L1433.2 531.6L1427.0 532.3L1423.4 526.9ZM1367.6 547.9L1378.4 547.9L1400.0 548.6L1407.2 548.2L1396.4 554.1L1378.4 549.7ZM1490.0 537.7L1497.3 533.0L1495.5 539.5L1486.4 540.2ZM1409.0 511.4L1412.6 512.5L1410.8 519.7L1408.3 516.1ZM1410.8 528.7L1419.8 528.7L1418.0 531.6L1411.6 530.8Z"/>
<path fill="#1a1b1b" d="M624.1 216.1L612.4 229.3L609.4 242.6L608.7 252.9L616.8 266.1L634.4 273.5L643.3 278.6L653.6 282.3L655.0 295.5L663.9 303.6L666.8 294.1L665.3 280.8L674.2 272.0L669.8 257.3L672.0 242.6L669.8 229.3L675.6 227.8L688.9 232.3L699.2 242.6L700.7 255.8L708.0 258.7L716.8 248.4L719.8 230.8L705.0 222.0L690.0 212.0L675.0 206.0L665.0 194.0L640.0 194.0L636.0 205.0ZM1064.4 518.6L1071.6 516.8L1072.7 521.5L1069.8 527.2L1064.1 525.1ZM1058.7 245.4L1064.4 244.7L1068.4 239.6L1067.0 235.1L1060.8 234.3L1058.3 240.3ZM1074.2 238.1L1078.8 237.4L1081.4 229.8L1076.7 225.1L1074.5 229.8ZM1055.1 529.7L1056.5 534.1L1060.5 547.5L1061.9 548.2L1058.7 535.9L1055.8 529.4ZM1119.2 338.6L1126.4 328.3L1135.4 325.7L1140.8 328.3L1140.8 335.0L1134.3 338.6L1139.0 350.9L1144.4 355.7L1142.6 365.1L1144.4 372.9L1133.6 376.1L1126.4 372.0L1128.2 358.1L1121.0 348.5ZM1050.8 354.8L1061.6 354.8L1076.0 350.9L1086.8 355.7L1099.4 353.3L1099.7 348.0L1090.4 338.6L1085.0 336.0L1081.4 334.5L1076.0 336.0L1070.6 338.6L1067.0 334.0L1070.6 330.9L1061.6 327.8L1056.9 334.5L1052.9 343.6L1050.8 350.9ZM1076.0 334.5L1083.2 334.5L1090.4 324.6L1077.8 328.3ZM1324.4 299.6L1333.4 295.0L1344.2 276.6L1342.4 289.0L1328.0 300.8ZM618.7 327.2L629.5 317.6L645.7 325.7L644.6 328.3L634.9 328.3ZM633.1 350.9L635.6 330.9L643.9 331.9L638.5 350.9ZM647.5 330.9L656.5 335.0L653.2 346.0L650.0 341.1ZM650.0 352.4L665.5 347.0L663.7 348.5L651.1 353.3ZM593.5 289.0L600.7 306.5L602.5 303.7L597.1 285.9ZM528.6 238.8L557.4 227.4L546.6 231.3L528.6 235.1ZM499.8 202.8L525.0 193.9L517.8 207.1L499.8 207.1Z"/>
<path fill="none" stroke="#4a4a4a" stroke-width="0.9" d="M506.0 314.9L607.1 314.9L607.9 312.7L627.7 320.3L645.7 328.3L653.2 336.0L652.9 348.5L665.5 344.6L674.5 341.1L681.0 336.0L692.5 336.0L697.9 328.3L700.8 323.5L705.8 325.7L705.8 332.4L708.7 337.0M442.2 244.0L442.2 137.7M442.2 244.0L449.4 249.7L460.2 249.7L469.2 256.7L481.8 274.0M528.3 394.0L536.9 393.1L550.2 399.1L560.3 399.1L566.4 397.0L573.6 406.2L579.0 408.7L584.8 405.4L591.7 414.8L599.9 421.3M617.9 465.1L618.7 452.0L622.3 452.7L628.7 452.7L632.0 450.1M628.7 452.7L628.7 459.9M628.4 465.5L634.9 468.8M642.1 477.3L648.9 478.4M651.1 487.1L651.4 483.1M671.6 486.8L670.9 492.6M688.9 475.1L689.6 489.0L706.9 495.5L706.9 510.7L697.9 513.5L699.7 533.4M665.5 512.5L672.7 516.1L678.1 518.6L679.9 525.1L669.1 530.5L660.8 530.5M685.3 532.3L697.9 533.4L688.9 552.2M733.9 487.1L733.9 499.1L746.5 510.7L755.5 509.6L764.1 503.1M744.7 496.2L741.1 512.5M755.5 497.3L755.5 509.6M943.4 383.2L945.6 396.1L936.6 402.4L918.6 409.9L918.6 415.6M918.6 415.6L918.6 420.9L906.7 420.9L906.7 430.8L895.9 432.7L888.7 439.3M932.6 424.8L954.3 441.6L964.3 447.4L970.8 446.6L993.1 430.8M984.1 403.7L985.9 424.8L993.1 430.8M991.3 391.9L984.1 403.7M980.5 374.3L979.8 385.4L984.1 403.7M1040.0 397.8L1040.0 436.6L1036.3 444.3M1040.0 436.6L1082.8 436.6M993.1 430.8L1003.9 432.7L1036.3 446.2M1036.3 446.2L1036.3 460.6L1030.9 466.9L1029.1 478.7M932.6 424.8L926.5 425.2L930.1 457.6L908.9 462.5L906.0 464.3M965.1 447.4L962.9 461.7L950.7 463.6M959.7 474.3L964.3 468.8L975.1 470.6L998.9 468.1M1005.7 432.7L1004.7 444.3L998.9 468.1M1029.1 478.7L1047.2 483.1L1058.0 483.1L1068.8 479.1L1072.4 483.5M1081.4 465.8L1094.0 465.1L1102.6 472.5L1104.8 478.0L1108.4 485.3L1122.8 489.0L1112.0 499.8L1101.2 503.4L1090.4 505.2L1079.6 501.6L1076.0 498.0L1072.4 489.0L1076.0 478.0L1081.4 465.8M1097.6 503.4L1097.6 524.0M993.1 499.8L1007.5 510.7L1016.5 499.8L1029.1 501.6L1049.0 499.8L1061.6 505.2L1058.0 517.9L1056.2 523.3L1060.8 546.8L1052.6 548.6M1072.4 521.5L1091.1 534.8M1072.4 503.4L1076.0 514.3L1072.4 521.5M980.9 501.3L993.1 492.6L1002.1 472.5M939.1 499.8L939.8 478.0M949.9 478.0L953.5 496.2M919.3 501.6L922.9 487.1L921.1 479.8M908.9 462.5L910.3 473.2L921.1 481.7L930.1 479.8L931.9 476.2L939.8 478.0L950.7 463.6M993.9 539.5L1007.5 544.9L1012.9 546.8L1029.1 557.7M985.2 509.6L990.6 509.9L998.5 509.9L1002.1 519.7L993.1 535.9M1079.6 394.9L1090.4 396.1L1101.2 400.4L1117.4 408.7L1122.8 410.7M1104.0 457.6L1119.2 455.7L1126.4 449.7L1137.2 448.2L1149.8 434.7L1150.5 428.8L1135.4 426.8M1079.6 376.5L1086.8 375.2L1102.2 373.8M1111.2 372.9L1113.8 383.2L1116.3 391.9L1122.8 402.4M1102.2 373.8L1098.3 385.4L1090.4 394.9M1077.8 391.9L1081.4 389.7L1089.6 390.1M1144.0 372.9L1155.2 369.7L1169.6 376.5M1169.6 376.5L1167.8 389.7L1169.6 398.2L1175.0 406.6L1171.4 424.0M1171.4 406.2L1189.4 404.9L1200.2 398.2L1205.6 387.5L1207.4 376.5L1218.2 374.3M1140.8 350.9L1151.6 354.3L1151.6 336.0L1169.6 338.6L1173.2 343.6L1187.6 346.0L1196.6 357.6L1205.6 348.5L1216.4 346.0L1238.0 346.0L1239.8 336.0L1247.0 325.7L1257.8 325.7L1263.2 314.9M1119.2 336.0L1124.6 328.3L1119.2 312.1L1133.6 299.6L1148.0 306.5L1169.6 303.7L1169.6 285.9L1198.4 277.8L1214.6 285.9L1227.2 289.6L1241.6 304.8L1263.2 313.8M1151.6 354.3L1158.8 348.5L1166.0 350.9L1171.4 355.7L1180.4 362.8L1189.4 372.0L1194.1 373.4L1203.8 368.4L1219.6 367.4M1266.1 313.8L1275.8 306.5L1302.8 297.9L1317.2 300.8L1335.2 306.5L1360.4 309.3L1369.4 310.5L1380.2 325.7L1367.6 328.3L1353.2 336.0L1335.2 350.9L1313.6 348.5L1295.6 347.5L1277.6 335.0L1275.8 323.0L1266.1 313.8M1369.4 310.5L1382.0 295.0L1403.6 293.2L1410.8 312.1L1421.6 321.4L1435.0 318.7L1430.6 336.0L1422.4 346.0L1419.8 348.5M1397.9 360.5L1410.8 353.3L1419.8 348.5M1405.4 370.6L1412.6 367.4M1238.0 346.0L1238.7 350.9L1230.8 355.7L1219.6 360.5L1219.6 367.4M1219.6 374.3L1229.0 381.0L1234.4 387.5L1232.6 394.0L1239.8 402.4L1243.4 402.9L1252.4 409.9L1266.8 413.2L1270.4 412.4L1281.2 413.6L1292.0 408.7L1299.9 412.0L1304.6 422.8L1301.0 428.8L1306.4 436.6L1314.3 439.7L1319.0 434.7L1331.6 433.5L1338.8 438.6M1239.8 408.7L1248.8 415.2L1266.8 419.2M1196.6 430.4L1203.8 426.8L1205.6 414.8L1218.2 396.1L1216.4 385.4L1229.0 381.0M1267.9 434.7L1270.4 420.9L1281.2 424.8L1283.0 436.6M1284.8 426.8L1290.2 416.8L1299.2 412.8M1304.6 481.7L1307.1 466.9L1303.9 457.6L1310.0 444.3L1314.3 439.7M1310.0 444.3L1317.2 452.0L1326.2 453.8L1329.8 466.2L1319.0 468.8M1331.6 433.5L1324.4 442.4L1335.2 459.5L1337.0 466.9L1331.6 476.9L1326.2 479.8M1310.7 494.4L1317.2 496.2M918.2 350.9L927.2 350.9L924.7 365.1L923.6 373.4M943.4 344.1L961.5 349.0M958.9 303.1L966.1 309.3L972.3 312.1L979.5 314.9L976.9 322.5L971.5 329.3L975.1 334.5L976.9 342.1M1001.1 286.5L1002.5 303.7L993.5 307.7L999.6 316.5L996.0 322.5L984.1 323.0L976.9 322.5M975.1 290.2L971.5 299.1L972.3 304.8M980.9 280.4L985.9 281.0M1034.5 285.9L1034.5 297.9L1036.3 306.5L1030.9 314.9M1002.5 303.7L1017.6 311.0L1030.9 314.9L1032.0 320.3L1025.5 318.7L1011.9 320.3L1009.3 328.3L999.3 332.4M984.1 323.0L994.9 325.7L999.3 328.3L1009.3 328.3M1009.3 328.3L1018.3 331.9L1027.3 328.3L1032.0 320.3L1045.7 319.2L1051.5 333.5M1018.3 331.9L1020.1 341.1L1018.3 346.0L1016.5 348.5M1030.9 338.6L1032.7 342.1L1052.9 342.6M1030.9 338.6L1031.7 353.8L1043.6 352.4L1044.6 360.5M1023.7 355.7L1032.7 353.8M1019.4 350.9L1023.7 355.7L1022.7 362.3M1025.5 273.4L1045.7 275.3L1051.5 272.1L1049.0 263.5L1050.0 251.1M1025.5 264.2L1040.0 261.5L1049.0 263.5M1025.9 277.8L1034.5 285.9M1051.5 272.1L1064.4 289.0L1059.8 300.8L1074.2 297.9L1094.0 311.6L1087.5 325.1M1030.9 314.9L1045.7 319.2L1058.0 328.3L1056.9 334.5M1093.6 344.1L1108.4 347.5L1122.0 354.3L1124.6 351.9M1099.4 353.3L1106.6 355.7L1111.2 361.9L1109.8 372.9L1111.2 372.9M991.3 253.3L994.2 238.8L993.1 223.5L1000.3 207.1L1005.7 193.9L1014.7 175.1M1037.1 200.1L1034.5 179.9L1023.7 169.1M1050.0 242.5L1058.0 231.3L1056.2 211.3L1058.0 189.3L1052.6 170.1M927.6 285.3L922.9 284.1L923.6 279.1M939.1 274.0L942.7 274.7M1457.3 527.2L1457.6 550.8M1362.2 500.6L1365.8 501.6M1344.6 510.7L1349.6 514.3L1360.4 513.2L1366.2 502.7L1371.9 502.4"/>
<g font-family="Liberation Sans, sans-serif" font-size="13" fill="#868686" stroke="#1e1e1e" stroke-width="2.2" paint-order="stroke" stroke-linejoin="round">
<text x="547.6" y="278">Canada</text>
<text x="863" y="209.3">Iceland</text>
<text x="992" y="209.3">Sweden</text>
<text x="960.6" y="239">Norway</text>
<text x="960.6" y="275.6">Denmark</text>
<text x="902.6" y="292.4">Ireland</text>
<text x="1029.7" y="290.6">Belarus</text>
<text x="1040.5" y="315.6">Ukraine</text>
<text x="1159.7" y="322">Kazakhstan</text>
<text x="920" y="356.9">Spain</text>
<text x="984.6" y="351.2">Italy</text>
<text x="1146.3" y="355">Uzbekistan</text>
<text x="1074.8" y="386">Syria</text>
<text x="1154" y="391.2">Afghanistan</text>
<text x="905.1" y="397.6">Morocco</text>
<text x="1000.6" y="419.5">Libya</text>
<text x="1237" y="415.1">Nepal</text>
<text x="1074.8" y="433.7">Saudi Arabia</text>
<text x="1219.8" y="438.9">India</text>
<text x="874.2" y="465.4">Senegal</text>
<text x="934.3" y="457">Mali</text>
<text x="968.8" y="457">Niger</text>
<text x="1102.4" y="462.9">Yemen</text>
<text x="1041" y="470.6">Sudan</text>
<text x="958.8" y="486">Nigeria</text>
<text x="1097.8" y="499.5">Somalia</text>
<text x="1190.1" y="509">Maldives</text>
<text x="1050.8" y="543.3">Tanzania</text>
<text x="1280.8" y="233.7">Russia</text>
<text x="1296.7" y="329">Mongolia</text>
<text x="1434.4" y="379.4">Japan</text>
<text x="1308" y="446.9">Laos</text>
<text x="1300.1" y="475.2">Cambodia</text>
<text x="1294.5" y="504.4">Malaysia</text>
<text x="1346.5" y="528.5">Indonesia</text>
<text x="1442.3" y="535.6">Papua New</text>
<text x="1455" y="551">Guinea</text>
<text x="561.4" y="431.5">Mexico</text>
<text x="665.3" y="556">Peru</text>
<text x="748" y="556">Brazil</text>
<text x="328.8" y="356.6" font-size="20.5" font-style="italic" letter-spacing="6.95" fill="#8a8a8a">North</text>
<text x="318.4" y="386.4" font-size="20.5" font-style="italic" letter-spacing="5.92" fill="#8a8a8a">Pacific</text>
<text x="326.2" y="415.7" font-size="20.5" font-style="italic" letter-spacing="5.57" fill="#8a8a8a">Ocean</text>
<text x="781.3" y="336.8" font-size="20.5" font-style="italic" letter-spacing="6.95" fill="#8a8a8a">North</text>
<text x="765.5" y="366.1" font-size="20.5" font-style="italic" letter-spacing="5.93" fill="#8a8a8a">Atlantic</text>
<text x="778.7" y="395.9" font-size="20.5" font-style="italic" letter-spacing="5.57" fill="#8a8a8a">Ocean</text>
</g>
<defs><radialGradient id="gOr"><stop offset="0" stop-color="#e34200"/><stop offset="0.52" stop-color="#e04000"/><stop offset="0.68" stop-color="#c43800" stop-opacity="0.9"/><stop offset="0.84" stop-color="#5a1e08" stop-opacity="0.55"/><stop offset="1" stop-color="#1a1b1b" stop-opacity="0"/></radialGradient><radialGradient id="gYe"><stop offset="0" stop-color="#ffc520"/><stop offset="0.6" stop-color="#ffc41f"/><stop offset="0.78" stop-color="#d9a61a" stop-opacity="0.85"/><stop offset="1" stop-color="#1a1b1b" stop-opacity="0"/></radialGradient></defs>
<circle cx="624" cy="379" r="52" fill="url(#gOr)"/>
<circle cx="981" cy="315.4" r="38" fill="url(#gYe)"/>
<circle cx="511.2" cy="374" r="25.2" fill="#ffc41f"/>
<circle cx="1344.3" cy="387.3" r="25.5" fill="#ffc41f"/>
<circle cx="1409.2" cy="372.7" r="25.4" fill="#ffc41f"/>
<circle cx="1041" cy="245.2" r="17.4" fill="#85bc00"/>
<circle cx="1055.5" cy="356.8" r="17.3" fill="#85bc00"/>
<circle cx="661" cy="423.1" r="17.4" fill="#85bc00"/>
<circle cx="683.5" cy="502" r="17.6" fill="#85bc00"/>
<g font-family="Liberation Sans, sans-serif" font-weight="700" font-size="16" fill="#141c2b" text-anchor="middle">
<text x="511.2" y="379.9" textLength="24.5" lengthAdjust="spacingAndGlyphs">369</text>
<text x="1344.3" y="393.2" textLength="24.5" lengthAdjust="spacingAndGlyphs">354</text>
<text x="1409.2" y="378.59999999999997" textLength="24.5" lengthAdjust="spacingAndGlyphs">378</text>
<text x="1041" y="251.1" textLength="24.5" lengthAdjust="spacingAndGlyphs">327</text>
<text x="1055.5" y="362.7" textLength="24.5" lengthAdjust="spacingAndGlyphs">342</text>
<text x="661" y="429.0" textLength="24.5" lengthAdjust="spacingAndGlyphs">348</text>
<text x="683.5" y="507.9" textLength="24.5" lengthAdjust="spacingAndGlyphs">314</text>
<text x="624" y="384.9" textLength="27.6" lengthAdjust="spacingAndGlyphs">2.9k</text>
<text x="981" y="321.29999999999995" textLength="24.5" lengthAdjust="spacingAndGlyphs">716</text>
</g>
<circle cx="323.7" cy="532.3" r="11.4" fill="#e6e6e6"/><path d="M318.5 538 C317.5 532 319 527.5 324 526.8 C328.5 526.5 330.5 531 328.5 534.5 C326.5 537.5 322 538.5 318.5 538 Z" fill="#1a1b1b"/><path d="M324.3 529.3 L325 531.3 L327 532 L325 532.7 L324.3 534.7 L323.6 532.7 L321.6 532 L323.6 531.3 Z" fill="#e6e6e6"/>
<text x="340" y="538" font-family="Liberation Sans, sans-serif" font-weight="700" font-size="20" fill="#e8e8e8" textLength="76.4" lengthAdjust="spacingAndGlyphs">mapbox</text>
<rect x="1258" y="529" width="342.4" height="25" fill="#9a9a9a" fill-opacity="0.85"/>
<text x="1264.9" y="547.5" font-family="Liberation Sans, sans-serif" font-size="15" fill="#303030" textLength="197.3" lengthAdjust="spacingAndGlyphs">© Mapbox © OpenStreetMap</text>
<text x="1470" y="547.5" font-family="Liberation Sans, sans-serif" font-size="15" font-weight="700" fill="#303030" textLength="123.8" lengthAdjust="spacingAndGlyphs">Improve this map</text>
</svg>
</svg>
</body></html>
